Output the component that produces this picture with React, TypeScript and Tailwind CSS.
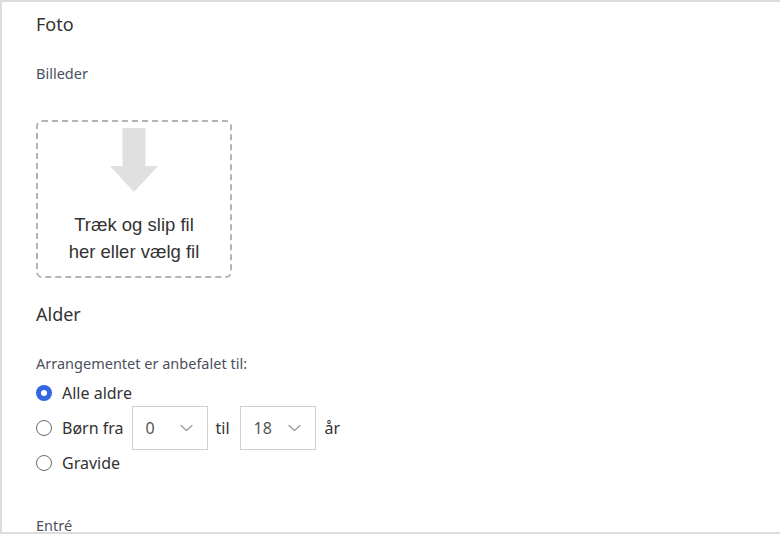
import React from 'react';

const ChevronDown: React.FC = () => (
  <svg width="13" height="8" viewBox="0 0 13 8" fill="none" className="shrink-0">
    <path d="M1 1.5l5.5 5 5.5-5" stroke="#9a9a9a" strokeWidth="1.3" strokeLinecap="round" strokeLinejoin="round" />
  </svg>
);

const Radio: React.FC<{ checked?: boolean }> = ({ checked }) =>
  checked ? (
    <span className="flex h-4 w-4 shrink-0 items-center justify-center rounded-full bg-[#3366e0]">
      <span className="h-[6px] w-[6px] rounded-full bg-white" />
    </span>
  ) : (
    <span className="h-4 w-4 shrink-0 rounded-full border border-[#6b6b6b] bg-white" />
  );

const Select: React.FC<{ value: string }> = ({ value }) => (
  <div className="flex h-[44px] w-[76px] items-center justify-between border border-[#cfcfcf] bg-white pl-[13px] pr-[14px] text-[16px] text-[#555]">
    <span>{value}</span>
    <ChevronDown />
  </div>
);

const App: React.FC = () => {
  return (
    <main
      className="h-[534px] w-full overflow-hidden border-b-2 border-l-2 border-t-2 border-[#dcdcdc] bg-white pl-[34px] pt-[10px]"
      style={{ fontFamily: '"Noto Sans", "Open Sans", sans-serif' }}
    >
      <h2 className="text-[18px] leading-[24px] text-[#333]">Foto</h2>
      <p className="mt-[27px] text-[14.5px] leading-[20px] text-[#4a5060]">Billeder</p>

      <div className="mt-[37px] flex h-[158px] w-[196px] flex-col items-center rounded-[6px] border-2 border-dashed border-[#b4b4b4] pt-[6px]">
        <svg width="48" height="64" viewBox="0 0 48 64">
          <path d="M12.5 0h23v38H48L24 64 0 38h12.5z" fill="#e0e0e0" />
        </svg>
        <p
          className="mt-[19px] text-center text-[18.5px] leading-[27px] text-[#333]"
          style={{ fontFamily: '"Liberation Sans", Arial, sans-serif' }}
        >
          Træk og slip fil
          <br />
          her eller vælg fil
        </p>
      </div>

      <h2 className="mt-[24px] text-[18px] leading-[24px] text-[#333]">Alder</h2>
      <p className="mt-[27px] text-[14.5px] leading-[20px] text-[#4a5060]">Arrangementet er anbefalet til:</p>

      <div className="mt-[9px] flex flex-col gap-[2px] text-[16px] text-[#333]">
        <label className="flex h-[22px] items-center gap-[10px]">
          <Radio checked />
          <span>Alle aldre</span>
        </label>
        <label className="flex h-[44px] items-center">
          <Radio />
          <span className="ml-[10px]">Børn fra</span>
          <span className="ml-[8px]">
            <Select value="0" />
          </span>
          <span className="ml-[8px]">til</span>
          <span className="ml-[10px]">
            <Select value="18" />
          </span>
          <span className="ml-[9px]">år</span>
        </label>
        <label className="flex h-[22px] items-center gap-[10px]">
          <Radio />
          <span>Gravide</span>
        </label>
      </div>

      <p className="mt-[41px] text-[14.5px] leading-[20px] text-[#4a5060]">Entré</p>
    </main>
  );
};

export default App;
